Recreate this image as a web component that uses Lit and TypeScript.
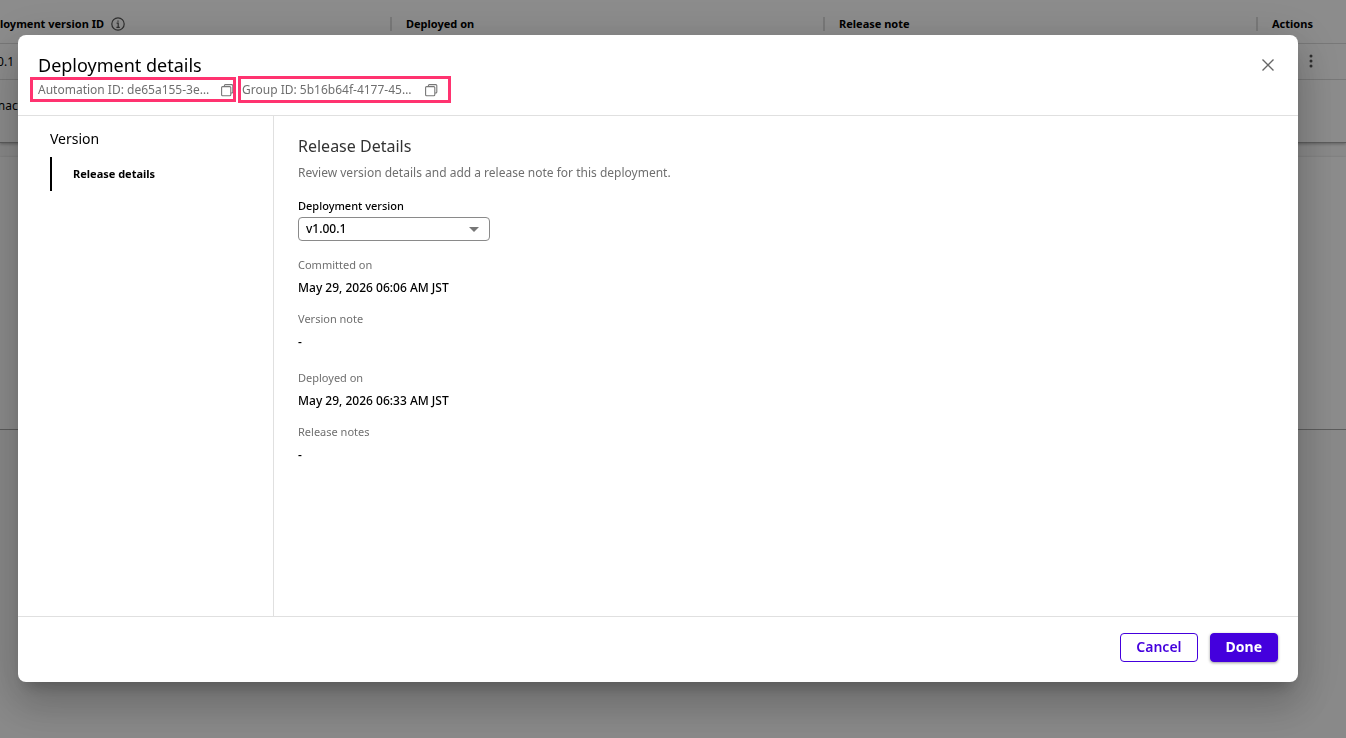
import { LitElement, html, css } from "lit";
import { customElement, property, state } from "lit/decorators.js";

const copyIcon = html`<svg width="13" height="13" viewBox="0 0 13 13" fill="none" stroke="currentColor" stroke-width="1.1" aria-hidden="true">
  <path d="M3.4 2.4V1.6a1 1 0 0 1 1-1h6.4a1 1 0 0 1 1 1V8a1 1 0 0 1-1 1H10" />
  <rect x="0.6" y="2.6" width="9.2" height="9.2" rx="1" />
</svg>`;

/** Deployment history tables that stay visible behind the dialog. */
@customElement("deployment-history")
export class DeploymentHistory extends LitElement {
  static styles = css`
    :host { display: block; overflow: hidden; background: #fafafa; color: #000; }
    .card { background: #fff; border-bottom: 1px solid #a8a8a8; box-shadow: 0 1px 3px rgba(0, 0, 0, 0.3); }
    .blank { height: 272px; margin-top: 14px; }
    table { width: 100%; border-collapse: collapse; table-layout: fixed; font-size: 12px; }
    .c-version { width: 390px; }
    .c-actions { width: 90px; }
    th, td { padding: 0; text-align: left; border-bottom: 1px solid #dadada; }
    th { height: 43px; padding-top: 5px; font-size: 11px; font-weight: 700; box-sizing: border-box; }
    td { height: 35px; }
    .last td { height: 63px; border-bottom: 0; vertical-align: top; padding-top: 17px; box-sizing: border-box; }
    .divided { border-left: 2px solid #dcdcdc; line-height: 14px; padding-left: 14px; display: block; }
    .clip { display: flex; justify-content: flex-end; align-items: center; gap: 7px; width: 125px; white-space: nowrap; }
    .clip.id { width: 14px; }
    .clip.state { width: 38px; }
    .more { border: 0; padding: 0; background: none; display: block; margin-left: 51px; color: #555; }
    svg { display: block; flex: none; }
  `;
  render() {
    return html`
      <div class="card">
        <table>
          <colgroup><col class="c-version" /><col /><col /><col class="c-actions" /></colgroup>
          <thead><tr>
            <th><span class="clip"><span>Deployment version ID</span>
              <svg width="14" height="14" viewBox="0 0 14 14" fill="none" stroke="#555" stroke-width="1.2"><circle cx="7" cy="7" r="6.2" /><path d="M5.6 6.2h1.6v4M5.4 10.3h3.4M7 3.4v1.4" /></svg></span></th>
            <th><span class="divided">Deployed on</span></th>
            <th><span class="divided">Release note</span></th>
            <th><span class="divided">Actions</span></th>
          </tr></thead>
          <tbody>
            <tr><td><span class="clip id">v1.00.1</span></td><td></td><td></td>
              <td><button class="more" aria-label="More actions"><svg width="8" height="16" viewBox="0 0 8 16" fill="currentColor"><circle cx="4" cy="3" r="1.5" /><circle cx="4" cy="8" r="1.5" /><circle cx="4" cy="13" r="1.5" /></svg></button></td></tr>
            <tr class="last"><td><span class="clip state">Inactive</span></td><td></td><td></td><td></td></tr>
          </tbody>
        </table>
      </div>
      <div class="card blank"></div>
    `;
  }
}

@customElement("copyable-id")
export class CopyableId extends LitElement {
  @property() label = "";
  @property() value = "";
  static styles = css`
    :host { display: inline-flex; align-items: center; gap: 7px; line-height: 18px; font-size: 12px; color: #6f6f6f; }
    span { min-width: 176px; }
    button { border: 0; padding: 0; background: none; color: #777; display: block; cursor: pointer; }
    svg { display: block; }
  `;
  render() {
    return html`<span>${this.label}: ${this.value}…</span>
      <button aria-label="Copy ${this.label}">${copyIcon}</button>`;
  }
}

@customElement("app-root")
export class AppRoot extends LitElement {
  @state() private details = [
    { label: "Committed on", value: "May 29, 2026 06:06 AM JST", note: false },
    { label: "Version note", value: "-", note: true },
    { label: "Deployed on", value: "May 29, 2026 06:33 AM JST", note: false },
    { label: "Release notes", value: "-", note: true },
  ];

  static styles = css`
    :host { display: block; min-height: 100vh; background: #fafafa; font-family: "Noto Sans", "Open Sans", sans-serif; color: #000; }
    *, *::before, *::after { box-sizing: border-box; }
    .backdrop { position: fixed; inset: 0; display: flex; padding: 35px 48px 56px 18px; background: rgba(0, 0, 0, 0.45); }
    .dialog { flex: 1; min-width: 0; display: flex; flex-direction: column; background: #fff; border-radius: 8px;
      box-shadow: 0 11px 15px -7px rgba(0, 0, 0, 0.2), 0 24px 38px 3px rgba(0, 0, 0, 0.14), 0 9px 46px 8px rgba(0, 0, 0, 0.12); }
    header { display: flex; justify-content: space-between; align-items: flex-start; padding: 17px 20px 16px; border-bottom: 1px solid #e0e0e0; }
    h1, h2, h3, p, dl, dd { margin: 0; font-weight: 400; }
    h1 { font-size: 18px; line-height: 26px; }
    .ids { display: flex; gap: 8px; padding-top: 3px; }
    .marked { position: relative; display: flex; }
    .marked::after { content: ""; position: absolute; inset: -4px -2px -3px -8px; border: 3px solid #ff3370; pointer-events: none; }
    .marked.wide::after { inset: -5px -13px -4px -4px; }
    .close { border: 0; background: none; padding: 6px 4px; color: #666; cursor: pointer; }
    .close svg { display: block; }
    .body { flex: 1; display: grid; grid-template-columns: 256px 1fr; min-height: 0; }
    nav { border-right: 1px solid #e0e0e0; padding: 13px 32px; }
    h3 { font-size: 14px; line-height: 20px; }
    nav a { display: block; margin-top: 8px; border-left: 2px solid #000; padding-left: 21px; font-size: 11px; line-height: 34px; font-weight: 700; color: #000; text-decoration: none; }
    main { padding: 19px 24px; }
    h2 { font-size: 16px; line-height: 22px; color: #333; }
    .hint { margin-top: 7px; font-size: 12px; line-height: 18px; color: #6f6f6f; }
    label { display: block; margin-top: 16px; font-size: 11px; line-height: 16px; font-weight: 500; }
    .picker { display: grid; width: 192px; margin-top: 3px; align-items: center; }
    .picker > * { grid-area: 1 / 1; }
    select { appearance: none; height: 24px; border: 1px solid #8a8a8a; border-radius: 4px; background: #fff; padding: 0 7px 1px; font: 500 12px "Noto Sans", "Open Sans", sans-serif; color: #000; }
    .picker svg { justify-self: end; margin-right: 11px; pointer-events: none; }
    dl { display: flex; flex-direction: column; gap: 14px; margin-top: 16px; }
    dt { font-size: 11px; line-height: 16px; color: #6f6f6f; }
    dd { margin-top: 6px; font-size: 12px; line-height: 18px; font-weight: 500; }
    .note { padding-bottom: 5px; }
    footer { display: flex; justify-content: flex-end; gap: 12px; padding: 16px 20px 20px; border-top: 1px solid #e0e0e0; }
    footer button { height: 29px; padding: 0 15px 2px; border: 1px solid #4400dd; border-radius: 4px; background: #fff; color: #4400dd; font: 600 14px "Noto Sans", "Open Sans", sans-serif; cursor: pointer; }
    footer .primary { background: #4400dd; color: #fff; font-weight: 700; box-shadow: 0 1px 3px rgba(0, 0, 0, 0.4); }
  `;

  render() {
    return html`
      <deployment-history></deployment-history>
      <div class="backdrop">
        <section class="dialog" role="dialog" aria-modal="true" aria-labelledby="title">
          <header>
            <div>
              <h1 id="title">Deployment details</h1>
              <div class="ids">
                <span class="marked"><copyable-id label="Automation ID" value="de65a155-3e"></copyable-id></span>
                <span class="marked wide"><copyable-id label="Group ID" value="5b16b64f-4177-45"></copyable-id></span>
              </div>
            </div>
            <button class="close" aria-label="Close"><svg width="12" height="14" viewBox="0 0 12 14" fill="none" stroke="currentColor" stroke-width="1.4"><path d="M.5 1.5l11 11M11.5 1.5l-11 11" /></svg></button>
          </header>
          <div class="body">
            <nav><h3>Version</h3><a href="#release">Release details</a></nav>
            <main id="release">
              <h2>Release Details</h2>
              <p class="hint">Review version details and add a release note for this deployment.</p>
              <label for="version">Deployment version</label>
              <div class="picker">
                <select id="version"><option>v1.00.1</option></select>
                <svg width="10" height="5" viewBox="0 0 10 5" fill="#777"><path d="M0 0h10L5 5z" /></svg>
              </div>
              <dl>
                ${this.details.map((d) => html`<div><dt>${d.label}</dt><dd class=${d.note ? "note" : ""}>${d.value}</dd></div>`)}
              </dl>
            </main>
          </div>
          <footer><button>Cancel</button><button class="primary">Done</button></footer>
        </section>
      </div>
    `;
  }
}
